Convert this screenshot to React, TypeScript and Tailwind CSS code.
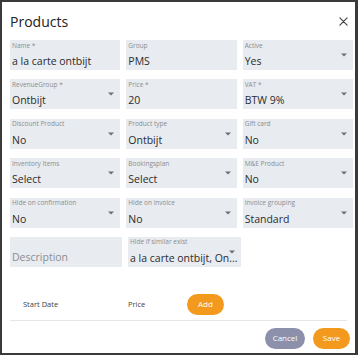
import { useState } from "react";

type Field = {
  label: string;
  value: string;
  select?: boolean;
};

const rows: Field[][] = [
  [
    { label: "Name *", value: "a la carte ontbijt" },
    { label: "Group", value: "PMS" },
    { label: "Active", value: "Yes", select: true },
  ],
  [
    { label: "RevenueGroup *", value: "Ontbijt", select: true },
    { label: "Price *", value: "20" },
    { label: "VAT *", value: "BTW 9%", select: true },
  ],
  [
    { label: "Discount Product", value: "No", select: true },
    { label: "Product type", value: "Ontbijt", select: true },
    { label: "Gift card", value: "No", select: true },
  ],
  [
    { label: "Inventory Items", value: "Select", select: true },
    { label: "Bookingsplan", value: "Select", select: true },
    { label: "M&E Product", value: "No", select: true },
  ],
  [
    { label: "Hide on confirmation", value: "No", select: true },
    { label: "Hide on invoice", value: "No", select: true },
    { label: "Invoice grouping", value: "Standard", select: true },
  ],
];

function Caret() {
  return (
    <svg
      width="6"
      height="4"
      viewBox="0 0 6 4"
      className="absolute right-[6px] top-1/2 -translate-y-1/2 text-[#6b6f75]"
    >
      <polygon points="0,0.5 6,0.5 3,3.5" fill="currentColor" />
    </svg>
  );
}

function FormField({ label, value, select, className = "" }: Field & { className?: string }) {
  return (
    <div className={`relative h-[30px] bg-[#e8ebef] px-[2px] pt-[1.5px] ${className}`}>
      <div className="text-[6.5px] leading-[7px] text-[#8a8d92]">{label}</div>
      <div className="mt-[5.5px] whitespace-nowrap text-[10.5px] leading-[14px] text-[#2c2c2c]">
        {value}
      </div>
      {select && <Caret />}
    </div>
  );
}

function CloseIcon() {
  return (
    <svg
      width="9"
      height="9"
      viewBox="0 0 10 10"
      fill="none"
      stroke="#444"
      strokeWidth="1.3"
      strokeLinecap="round"
    >
      <path d="M1 1l8 8M9 1l-8 8" />
    </svg>
  );
}

export default function App() {
  const [open] = useState(true);
  if (!open) return null;

  return (
    <div
      className="flex h-[355px] w-[358px] flex-col border-b-2 border-l-2 border-r-[3px] border-t-2 border-[#3a3a3a] bg-white"
      style={{ fontFamily: '"Open Sans", "Noto Sans", sans-serif' }}
    >
      <div className="flex h-[38px] items-center justify-between pl-[8px] pr-[7px]">
        <h1 className="text-[14px] font-normal text-[#222]">Products</h1>
        <CloseIcon />
      </div>

      <div className="grid grid-cols-3 gap-x-[6px] gap-y-[9.4px] pl-[8px] pr-[2px]">
        {rows.flat().map((f) => (
          <FormField key={f.label} {...f} />
        ))}
      </div>

      <div className="mt-[9.4px] flex gap-x-[6px] pl-[8px]">
        <div className="flex h-[30px] w-[112px] items-center bg-[#e8ebef] px-[2px] pt-[10px]">
          <span className="text-[10.5px] leading-[14px] text-[#8a8d92]">Description</span>
        </div>
        <FormField
          className="w-[113px]"
          label="Hide if similar exist"
          value="a la carte ontbijt, On..."
          select
        />
      </div>

      <div className="mx-[8px] mt-[27px] flex h-[21px] items-center">
        <span className="ml-[13px] w-[105px] text-[7.5px] text-[#444]">Start Date</span>
        <span className="w-[59px] text-[7.5px] text-[#444]">Price</span>
        <button className="h-[21px] w-[37px] rounded-full bg-[#f39a1e] text-[8px] text-white">
          Add
        </button>
      </div>
      <div className="mx-[8px] mt-[5px] border-t border-[#e6e6e6]" />

      <div className="mt-[7px] flex justify-end gap-x-[8px] pr-[5px]">
        <button className="h-[21px] w-[40px] rounded-full bg-[#8c90ab] text-[8px] text-white">
          Cancel
        </button>
        <button className="h-[21px] w-[37px] rounded-full bg-[#f39a1e] text-[8px] text-white">
          Save
        </button>
      </div>
    </div>
  );
}
